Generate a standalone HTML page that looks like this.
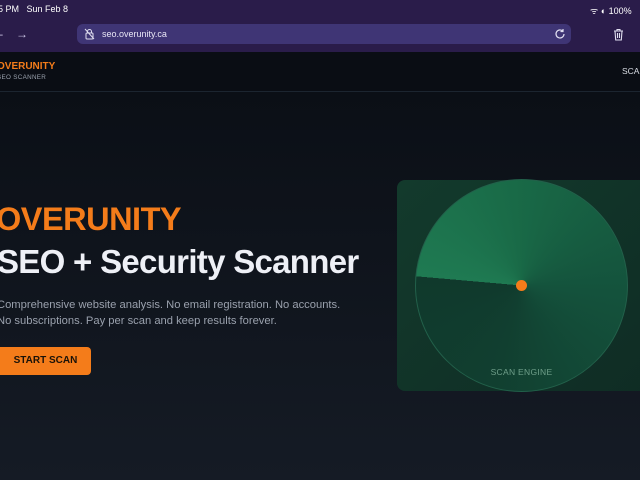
<!DOCTYPE html>
<html><head><style>
*{margin:0;padding:0;box-sizing:border-box}
body{width:640px;height:480px;overflow:hidden;font-family:"Liberation Sans",sans-serif;background:#0b0f16;position:relative}
.status{position:absolute;top:0;left:0;width:640px;height:52px;background:#2a1c4a}
.st{position:absolute;top:4px;font-size:9px;color:#fff}
.url{position:absolute;left:77px;top:24px;width:494px;height:20px;border-radius:6px;background:#3f3575}
.url span{position:absolute;left:25px;top:5px;font-size:9px;color:#e8e6f5}
.nav{position:absolute;top:52px;left:0;width:640px;height:40px;background:#0a0d14;border-bottom:1px solid #1c2530}
.main{position:absolute;top:92px;left:0;width:640px;height:388px;background:linear-gradient(180deg,#0b0f16 0%,#151b25 100%)}
.h1{position:absolute;left:-4px;top:201px;font-size:32.5px;font-weight:bold;color:#f47c1a;letter-spacing:-0.5px}
.h2{position:absolute;left:-3px;top:243px;font-size:33px;font-weight:bold;color:#eef0f6;letter-spacing:-0.7px}
.p{position:absolute;left:-3px;top:297px;font-size:11.2px;line-height:16px;color:#9aa1ad}
.btn{position:absolute;left:-6px;top:347px;width:97px;height:28px;background:#f47c1a;border-radius:4px;color:#1a1208;font-size:10px;font-weight:bold;text-align:center;line-height:28px;padding-left:6px}
.panel{position:absolute;left:397px;top:180px;width:260px;height:211px;border-radius:8px;background:linear-gradient(135deg,#133a2c,#0f2c24)}
.circ{position:absolute;left:18px;top:-1px;width:213px;height:213px;border-radius:50%;border:1px solid #22604a;background:conic-gradient(from 275deg,#1f7a52 0deg,#196a47 80deg,#14523c 180deg,#113f30 280deg,#10392c 360deg)}
.dot{position:absolute;left:119px;top:100px;width:11px;height:11px;border-radius:50%;background:#f47c1a}
.se{position:absolute;left:0;width:249px;top:187px;text-align:center;font-size:8.5px;color:#6f9f8a;letter-spacing:0.3px}
</style></head><body>
<div class="status">
<div class="st" style="left:-2px">5 PM&nbsp;&nbsp; Sun Feb 8</div>
<div class="st" style="left:590px">ᯤ ◐ 100%</div>
<div style="position:absolute;left:-4px;top:27px;color:#cfc9e8;font-size:12px">–&nbsp;&nbsp;&nbsp;&nbsp;→</div>
<div class="url"><svg style="position:absolute;left:7px;top:4px" width="11" height="12" viewBox="0 0 11 12" fill="none" stroke="#e0def0" stroke-width="1"><rect x="2" y="5" width="7" height="6" rx="1"/><path d="M3.5 5V3.5a2 2 0 014 0V5M1 1l9 10"/></svg><span>seo.overunity.ca</span>
<svg style="position:absolute;left:477px;top:4px" width="12" height="12" viewBox="0 0 12 12" fill="none" stroke="#e0def0" stroke-width="1.2"><path d="M10 6a4 4 0 11-1.2-2.9M9 1v2.5H6.5"/></svg></div>
<svg style="position:absolute;left:613px;top:28px" width="11" height="13" viewBox="0 0 11 13" fill="none" stroke="#e0def0" stroke-width="1.1"><path d="M1 3h9M4 3V1.5h3V3M2 3l.7 9h5.6L9 3M4.5 5v5M6.5 5v5"/></svg>
</div>
<div class="nav">
<div style="position:absolute;left:-3px;top:9px;font-size:10px;font-weight:bold;color:#f47c1a">OVERUNITY</div>
<div style="position:absolute;left:-3px;top:22px;font-size:6.3px;color:#9aa1ad;letter-spacing:0.3px">SEO SCANNER</div>
<div style="position:absolute;left:622px;top:14px;font-size:8.5px;color:#d8dce4">SCAN</div>
</div>
<div class="main"></div>
<div class="h1">OVERUNITY</div>
<div class="h2">SEO + Security Scanner</div>
<div class="p">Comprehensive website analysis. No email registration. No accounts.<br>No subscriptions. Pay per scan and keep results forever.</div>
<div class="btn">START SCAN</div>
<div class="panel"><div class="circ"></div><div class="dot"></div><div class="se">SCAN ENGINE</div></div>
</body></html>
